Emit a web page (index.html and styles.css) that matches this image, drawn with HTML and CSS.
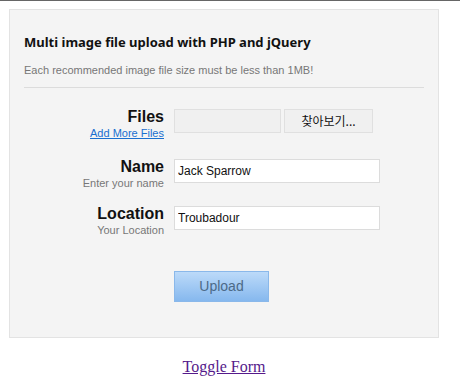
FILE: index.html
```html
<!DOCTYPE html>
<html>
<head>
<meta charset="utf-8">
<link rel="stylesheet" href="styles.css">
</head>
<body>
<div class="topline"></div>
<div class="page">
  <div class="box">
    <h1 class="title">Multi image file upload with PHP and jQuery</h1>
    <p class="note">Each recommended image file size must be less than 1MB!</p>
    <div class="divider"></div>
    <form class="form">
      <div class="row row-files">
        <div class="label">
          <div class="big">Files</div>
          <a class="more" href="#">Add More Files</a>
        </div>
        <div class="file">
          <span class="file-name"></span>
          <span class="file-btn">찾아보기...</span>
        </div>
      </div>
      <div class="row row-name">
        <div class="label">
          <div class="big">Name</div>
          <div class="small">Enter your name</div>
        </div>
        <input class="text" type="text" value="Jack Sparrow">
      </div>
      <div class="row row-loc">
        <div class="label">
          <div class="big">Location</div>
          <div class="small">Your Location</div>
        </div>
        <input class="text" type="text" value="Troubadour">
      </div>
      <div class="actions">
        <span class="upload">Upload</span>
      </div>
    </form>
  </div>
  <div class="toggle"><a href="#">Toggle Form</a></div>
</div>
</body>
</html>
```

FILE: styles.css
```css
html, body {
  margin: 0;
  padding: 0;
  background: #fff;
}
.topline {
  height: 1px;
  background: #666;
}
.page {
  padding: 8px 0 0 9px;
  width: 430px;
}
.box {
  background: #f4f4f4;
  border: 1px solid #e3e3e3;
  padding: 0 14px;
  height: 327px;
}
.title {
  margin: 0;
  padding-top: 23px;
  font-family: "Noto Sans", sans-serif;
  font-weight: bold;
  font-size: 13px;
  line-height: 18px;
  color: #111;
}
.note {
  margin: 0;
  padding-top: 12px;
  font-family: "Liberation Sans", Arial, sans-serif;
  font-size: 11px;
  line-height: 14px;
  color: #777;
}
.divider {
  margin-top: 10px;
  height: 1px;
  background: #dcdcdc;
}
.form {
  padding-top: 20px;
  font-family: "Liberation Sans", Arial, sans-serif;
}
.row {
  display: flex;
  align-items: flex-start;
  gap: 10px;
}
.row-name { margin-top: 18px; }
.row-loc { margin-top: 15px; }
.label {
  width: 140px;
  text-align: right;
}
.big {
  font-size: 16px;
  font-weight: bold;
  line-height: 18px;
  color: #111;
}
.small {
  font-size: 11px;
  line-height: 14px;
  color: #777;
}
.more {
  display: block;
  font-size: 11px;
  line-height: 14px;
  color: #1a6fd0;
}
.file {
  display: flex;
  gap: 3px;
  margin-top: 1px;
}
.file-name {
  width: 105px;
  height: 22px;
  background: #f0f0f0;
  border: 1px solid #e0e0e0;
}
.file-btn {
  width: 87px;
  height: 22px;
  background: #f0f0f0;
  border: 1px solid #e0e0e0;
  font-family: "Noto Sans CJK KR", sans-serif;
  font-size: 12px;
  line-height: 22px;
  text-align: center;
  color: #111;
}
.text {
  margin: 1px 0 0 0;
  width: 206px;
  height: 24px;
  box-sizing: border-box;
  border: 1px solid #dcdcdc;
  background: #fff;
  padding: 0 3px;
  font-family: "Liberation Sans", Arial, sans-serif;
  font-size: 12px;
  color: #111;
  outline: none;
}
.actions {
  padding-left: 150px;
  margin-top: 34px;
}
.upload {
  display: inline-block;
  width: 93px;
  height: 29px;
  border: 1px solid #8ab8ea;
  background: linear-gradient(#bcdaf9, #86b8ee);
  font-family: "Liberation Sans", Arial, sans-serif;
  font-size: 14px;
  line-height: 29px;
  text-align: center;
  color: #4c6a88;
}
.toggle {
  text-align: center;
  margin-top: 20px;
  font-family: "Liberation Serif", "Times New Roman", serif;
  font-size: 16px;
  line-height: 18px;
}
.toggle a {
  color: #551a8b;
}
```
